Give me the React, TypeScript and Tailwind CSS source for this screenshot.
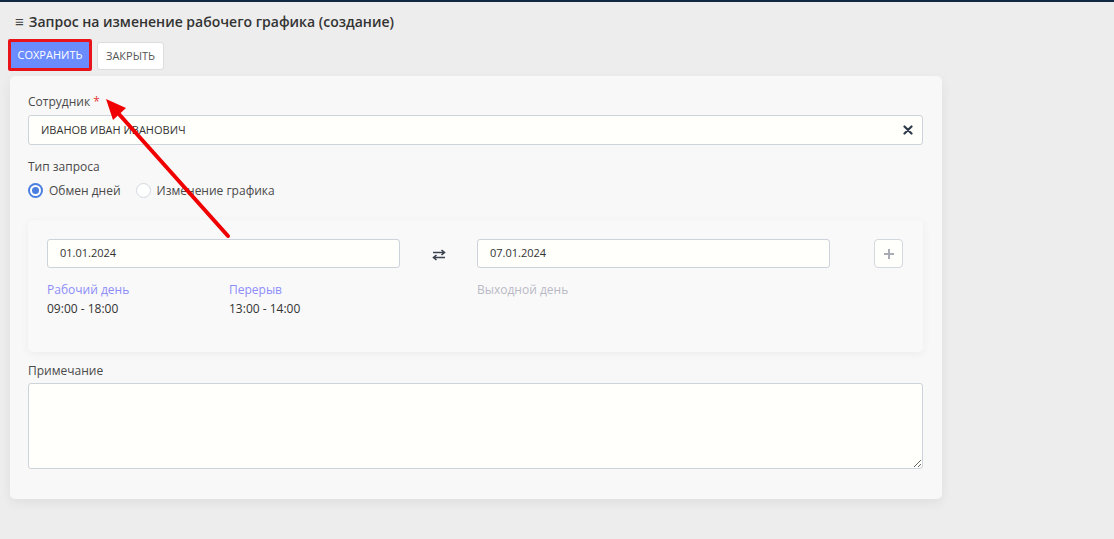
import React from 'react';

const font = { fontFamily: '"Open Sans", "Noto Sans", sans-serif' };

const ClearIcon = () => (
  <svg width="10" height="10" viewBox="0 0 10 10">
    <path d="M1.5 1.5 L8.5 8.5 M8.5 1.5 L1.5 8.5" stroke="#2f3b4c" strokeWidth="2.2" strokeLinecap="round" />
  </svg>
);

const SwapIcon = () => (
  <svg width="14" height="12" viewBox="0 0 14 12">
    <path d="M1 3.5 H12 M9.5 1 L12.5 3.5 L9.5 6" stroke="#3b4350" strokeWidth="1.6" fill="none" />
    <path d="M13 8.5 H2 M4.5 6 L1.5 8.5 L4.5 11" stroke="#3b4350" strokeWidth="1.6" fill="none" />
  </svg>
);

const PlusIcon = () => (
  <svg width="12" height="12" viewBox="0 0 12 12">
    <path d="M6 1 V11 M1 6 H11" stroke="#a9acb4" strokeWidth="2" />
  </svg>
);

const Radio = ({ checked, label }: { checked?: boolean; label: string }) => (
  <label className="flex items-center gap-[6px] text-[12px] text-[#4a4a4a]">
    {checked ? (
      <span className="w-[15px] h-[15px] rounded-full bg-[#4a7fe0] flex items-center justify-center">
        <span className="w-[11px] h-[11px] rounded-full bg-white flex items-center justify-center">
          <span className="w-[7px] h-[7px] rounded-full bg-[#4a7fe0]" />
        </span>
      </span>
    ) : (
      <span className="w-[15px] h-[15px] rounded-full bg-white border border-[#d3d7df]" />
    )}
    {label}
  </label>
);

const DateInput = ({ value }: { value: string }) => (
  <div className="w-[353px] h-[29px] bg-[#fffffb] border border-[#cdd2db] rounded-[3px] flex items-center pl-[12px] text-[11px] text-[#333]">
    {value}
  </div>
);

export default function App() {
  return (
    <div className="relative min-h-screen bg-[#ededed] border-t-2 border-[#0f2740]" style={font}>
      {/* Title */}
      <div className="h-[36px] pt-[2px] flex items-center pl-[15px] gap-[5px] text-[14px] font-semibold text-[#333]">
        <span className="text-[15px] font-normal text-[#444]">≡</span>
        <span>Запрос на изменение рабочего графика (создание)</span>
      </div>

      {/* Buttons */}
      <div className="flex items-start gap-[5px] pl-[8px] mt-[1px]">
        <div className="border-[3px] border-[#e8141a] rounded-[2px]">
          <button className="h-[26px] w-[78px] bg-[#6b8cff] text-white text-[11px] uppercase flex items-center justify-center">
            Сохранить
          </button>
        </div>
        <button className="mt-[3px] h-[28px] w-[67px] bg-white border border-[#dcdcdc] rounded-[3px] text-[#555] text-[11px] flex items-center justify-center">
          ЗАКРЫТЬ
        </button>
      </div>

      {/* Card */}
      <div className="ml-[10px] mt-[5px] w-[932px] bg-[#f8f8f8] rounded-[5px] shadow-[0_4px_12px_rgba(0,0,0,0.06)] pt-[18px] pb-[30px] pl-[18px] pr-[19px]">
        <div className="h-[21px] text-[12px] text-[#4a4a4a] leading-[16px]">
          Сотрудник <span className="text-[#e53935]">*</span>
        </div>
        <div className="h-[30px] bg-[#fffffb] border border-[#cdd2db] rounded-[3px] flex items-center justify-between pl-[12px] pr-[9px] text-[11px] text-[#333]">
          <span>ИВАНОВ ИВАН ИВАНОВИЧ</span>
          <ClearIcon />
        </div>

        <div className="mt-[13px] h-[18px] text-[12px] text-[#4a4a4a] leading-[18px]">Тип запроса</div>
        <div className="mt-[6px] flex items-center gap-[15px] h-[17px]">
          <Radio checked label="Обмен дней" />
          <Radio label="Изменение графика" />
        </div>

        {/* Swap panel */}
        <div className="mt-[21px] h-[132px] bg-[#f9f9f9] rounded-[5px] shadow-[0_2px_10px_rgba(0,0,0,0.05)] pt-[19px] px-[19px]">
          <div className="flex items-start">
            <div>
              <DateInput value="01.01.2024" />
              <div className="flex mt-[14px] text-[12px]">
                <div className="w-[182px]">
                  <div className="text-[#8d8dfa] leading-[16px]">Рабочий день</div>
                  <div className="text-[#333] leading-[16px] mt-[3px]">09:00 - 18:00</div>
                </div>
                <div>
                  <div className="text-[#8d8dfa] leading-[16px]">Перерыв</div>
                  <div className="text-[#333] leading-[16px] mt-[3px]">13:00 - 14:00</div>
                </div>
              </div>
            </div>
            <div className="w-[77px] h-[29px] flex items-center justify-center pt-[3px]">
              <SwapIcon />
            </div>
            <div>
              <DateInput value="07.01.2024" />
              <div className="mt-[14px] text-[12px] leading-[16px] text-[#b9b9c6]">Выходной день</div>
            </div>
            <button className="ml-[44px] w-[29px] h-[29px] bg-[#fffffb] border border-[#d3d7de] rounded-[4px] flex items-center justify-center">
              <PlusIcon />
            </button>
          </div>
        </div>

        <div className="mt-[11px] h-[20px] text-[12px] text-[#4a4a4a] leading-[16px]">Примечание</div>
        <textarea className="block w-full h-[86px] bg-[#fffffb] border border-[#cdd2db] rounded-[3px] outline-none" />
      </div>

      {/* Annotation arrow */}
      <svg className="absolute left-0 top-0 pointer-events-none" width="1114" height="539">
        <line x1="228" y1="234" x2="118" y2="111" stroke="#f00000" strokeWidth="4" strokeLinecap="round" />
        <polygon points="106,97 126,106 113,118" fill="#f00000" />
      </svg>
    </div>
  );
}
